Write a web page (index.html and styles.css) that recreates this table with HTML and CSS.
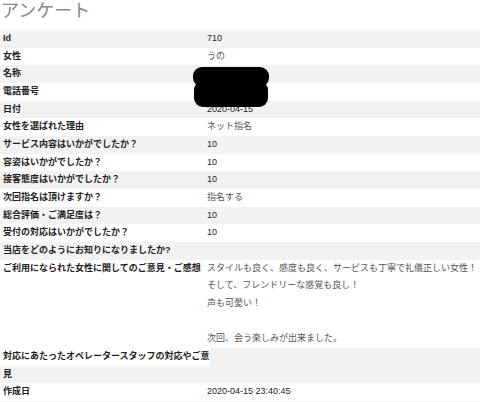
FILE: index.html
```html
<!DOCTYPE html>
<html lang="ja">
<head>
<meta charset="utf-8">
<title>アンケート</title>
<link rel="stylesheet" href="styles.css">
</head>
<body>
<h1 class="page-title">アンケート</h1>
<div class="sheet">
<table class="survey">
<tbody>
<tr><th>Id</th><td class="num">710</td></tr>
<tr><th>女性</th><td>うの</td></tr>
<tr><th>名称</th><td>&nbsp;</td></tr>
<tr><th>電話番号</th><td>&nbsp;</td></tr>
<tr><th>日付</th><td class="num">2020-04-15</td></tr>
<tr><th>女性を選ばれた理由</th><td>ネット指名</td></tr>
<tr><th>サービス内容はいかがでしたか？</th><td class="num">10</td></tr>
<tr><th>容姿はいかがでしたか？</th><td class="num">10</td></tr>
<tr><th>接客態度はいかがでしたか？</th><td class="num">10</td></tr>
<tr><th>次回指名は頂けますか？</th><td>指名する</td></tr>
<tr><th>総合評価・ご満足度は？</th><td class="num">10</td></tr>
<tr><th>受付の対応はいかがでしたか？</th><td class="num">10</td></tr>
<tr><th>当店をどのようにお知りになりましたか?</th><td></td></tr>
<tr><th>ご利用になられた女性に関してのご意見・ご感想</th><td>スタイルも良く、感度も良く、サービスも丁寧で礼儀正しい女性！<br>そして、フレンドリーな感覚も良し！<br>声も可愛い！<br><br>次回、会う楽しみが出来ました。</td></tr>
<tr><th colspan="2" class="wide"><div class="wide-label">対応にあたったオペレータースタッフの対応やご意見</div></th></tr>
<tr><th>作成日</th><td class="num">2020-04-15 23:40:45</td></tr>
<tr><th>&nbsp;</th><td>&nbsp;</td></tr>
</tbody>
</table>
<svg class="redact" width="80" height="42" viewBox="0 0 80 42" aria-hidden="true">
<rect x="1" y="0" width="76" height="20" rx="9" fill="#000"/>
<rect x="2" y="14" width="74" height="26" rx="9" fill="#000"/>
<rect x="4" y="10" width="70" height="14" fill="#000"/>
</svg>
</div>
</body>
</html>
```
FILE: styles.css
```css
html, body {
  margin: 0;
  padding: 0;
  background: #fff;
}
body {
  font-family: "Liberation Sans", "Noto Sans CJK JP", sans-serif;
  color: #333;
}
.page-title {
  margin: 0 0 8px 0;
  padding-left: 1px;
  font-size: 18px;
  line-height: 22px;
  font-weight: normal;
  color: #888;
  font-family: "Liberation Sans", "Noto Sans CJK JP", sans-serif;
}
.sheet {
  position: relative;
}
.survey {
  width: 100%;
  border-collapse: collapse;
  border-spacing: 0;
  font-size: 9px;
  line-height: 17.67px;
}
.survey tr:nth-child(odd) {
  background: #f2f2f2;
}
.survey th,
.survey td {
  padding: 0 0 0 3px;
  vertical-align: top;
  text-align: left;
}
.survey th {
  width: 201px;
  font-weight: bold;
  color: #222;
}
.survey td {
  color: #555;
}
.survey td.num {
  color: #222;
}
.survey th.wide {
  padding: 0;
}
.wide-label {
  width: 207px;
  padding-left: 3px;
  background: linear-gradient(#fff 0 17.67px, transparent 17.67px);
}
.redact {
  position: absolute;
  left: 192px;
  top: 37px;
}
```
